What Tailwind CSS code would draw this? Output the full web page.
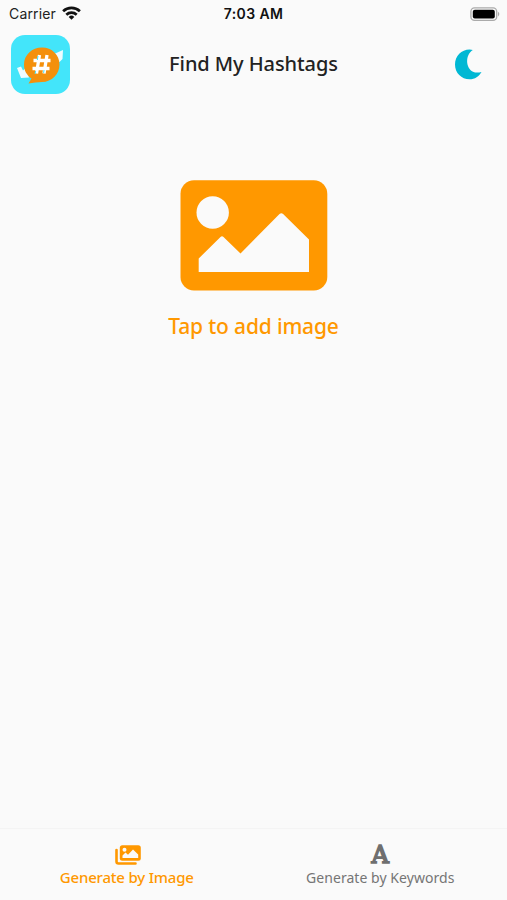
<!DOCTYPE html>
<html lang="en">
<head>
<meta charset="utf-8">
<title>Find My Hashtags</title>
<script src="https://cdn.jsdelivr.net/npm/@tailwindcss/browser@4"></script>
</head>
<body class="bg-[#fafafa]">
<div class="w-[507px] h-[900px] flex flex-col overflow-hidden bg-[#fafafa] font-['Noto_Sans',sans-serif]">
  <div class="h-7 shrink-0 grid grid-cols-3 items-center pl-[9px] pr-[7px] font-['Inter',sans-serif] text-[#222]">
    <div class="flex items-center gap-[6px]">
      <span class="text-[14px] leading-7 tracking-[0.15px]">Carrier</span>
      <svg class="w-[19px] h-[14px] -mt-[2px]" viewBox="0 0 19 14" fill="none" stroke="#111" stroke-width="2.7"><path d="M1.1 5.2a12.2 12.2 0 0 1 16.8 0M4.3 8.7a7.6 7.6 0 0 1 10.4 0"/><path d="M9.5 13.7 6.7 10.9a4 4 0 0 1 5.6 0z" fill="#111" stroke="none"/></svg>
    </div>
    <span class="justify-self-center -ml-[2px] text-[14px] leading-7 font-semibold tracking-[0.4px] text-[#111] whitespace-nowrap">7:03 AM</span>
    <svg class="w-[30px] h-[14px] justify-self-end -mt-px" viewBox="0 0 30 14"><rect x=".9" y=".9" width="25.8" height="12.4" rx="3.6" fill="#fafafa" stroke="#aaa" stroke-width="1.3"/><rect x="2.8" y="2.7" width="22" height="8.8" rx="2" fill="#000"/><path d="M28 4.8q2.6 2.2 0 4.6z" fill="#aaa"/></svg>
  </div>
  <header class="h-[73px] shrink-0 grid grid-cols-[1fr_auto_1fr] items-center pl-[11px] pr-[25px]">
    <svg class="w-[59px] h-[59px]" viewBox="0 0 59 59">
      <rect width="59" height="59" rx="14" fill="#43e5fa"/>
      <path d="m6 33 4-1.500 2 4 3-3 3 10-8 .5zM43 19l9-4-.5 9-3 3-4-1z" fill="#eefcff"/>
      <path d="M31 12.500c10 0 17.500 7.500 17.500 17S41 47 31 47c-3.500 0-9 .8-13.500 1.500l3-5C15.500 40 13 35.500 13 29.500c0-9.500 8-17 18-17z" fill="#f4900c"/>
      <g stroke="#fff" stroke-width="3.300"><path d="m28.500 20-3 18.500M36 20l-3 18.500M22.500 25.500h17M21.500 33.500h17"/></g>
      <path d="m27 21-.7 4M24.600 36l-.5 3M33 35l-.4 3" stroke="#43e5fa" stroke-width="1"/>
    </svg>
    <h1 class="ml-[14px] -mt-[2px] text-[20px] leading-7 font-medium tracking-[-0.08px] text-[#222] whitespace-nowrap">Find My Hashtags</h1>
    <svg class="w-[27px] h-[31px] justify-self-end" viewBox="0 0 27 31"><path d="M17.800 1C10 6 10.500 19 18 22.700c2.800 1.300 5.500 1 8.500.3C24 27.500 20 30.300 14.500 30.300 6.500 30.300 0 24 0 15.500 0 7 6.500.5 14.500.5c1.300 0 2.500.2 3.300.5z" fill="#00b8d4"/></svg>
  </header>
  <main class="flex-1 flex flex-col items-center pt-[79px] text-[#ff9800]">
    <svg class="w-[148px] h-[111px]" viewBox="0 0 148 111"><rect x=".5" y=".3" width="146.800" height="110.200" rx="13.500" fill="#ff9800"/><circle cx="32.700" cy="32.500" r="16.200" fill="#fafafa"/><path d="M18.700 92V78.500L40.500 57q1.500-1.300 3 0L60.500 73.500 99.500 34q1.800-1.500 3.600 0L129 59.500V92z" fill="#fafafa"/></svg>
    <p class="mt-[19px] text-[21px] leading-8 font-medium tracking-[-0.17px] whitespace-nowrap">Tap to add image</p>
  </main>
  <nav class="h-[72px] shrink-0 grid grid-cols-2 border-t border-[#f4f4f4]">
    <div class="flex flex-col items-center pt-4 text-[#ff9800]">
      <svg class="w-[26px] h-5 ml-[3px]" viewBox="0 0 26 20"><path d="M1.500 5v11.500a2 2 0 0 0 2 2h17" fill="none" stroke="#ff9800" stroke-width="2.600" stroke-linecap="round"/><rect x="4.800" y=".2" width="21" height="15.500" rx="2.500" fill="#ff9800"/><circle cx="9.500" cy="4.800" r="2" fill="#fafafa"/><path d="M7.500 13V10.500l3-3 2.500 2.200 5-5.200 5.200 5V13z" fill="#fafafa"/></svg>
      <span class="text-[15px] leading-6 font-medium tracking-[-0.2px] whitespace-nowrap">Generate by Image</span>
    </div>
    <div class="flex flex-col items-center pt-4 text-[#757575]">
      <span class="h-5 font-['DejaVu_Serif',serif] text-[24px] leading-[21px] font-normal text-[#6f6f6f] [-webkit-text-stroke:1.6px_#6f6f6f]">A</span>
      <span class="mt-px text-[14px] leading-6 tracking-[0.05px] whitespace-nowrap">Generate by Keywords</span>
    </div>
  </nav>
</div>
</body>
</html>
